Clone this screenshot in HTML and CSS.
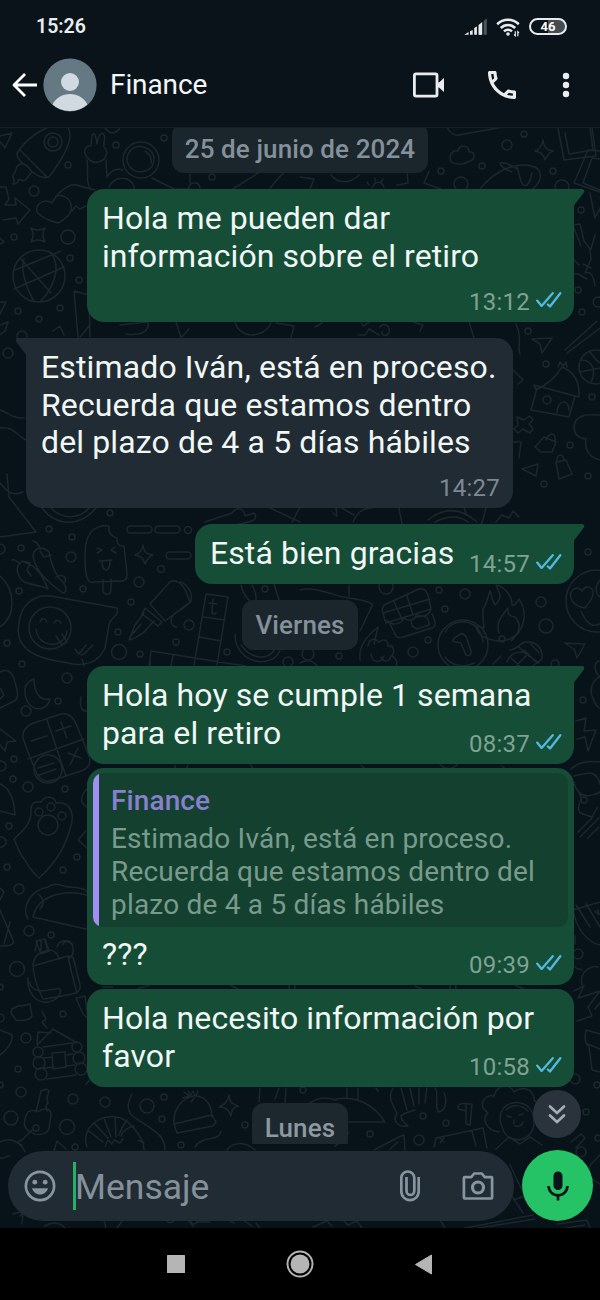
FILE: index.html
```html
<!DOCTYPE html>
<html lang="es">
<head>
<meta charset="utf-8">
<title>Finance</title>
<link rel="stylesheet" href="styles.css">
</head>
<body>
<svg class="defs" width="0" height="0">
  <symbol id="ticks" viewBox="0 0 26 16"><path d="M1.2 8.6 5.6 13.9 16.7 1.2M11.9 12.5l2.1 2L24.3 1.2" fill="none" stroke="#53b9df" stroke-width="2.300" stroke-linecap="round" stroke-linejoin="round"/></symbol>
</svg>
<div class="phone">
  <header class="top">
    <div class="status">
      <span class="clock">15:26</span>
      <div class="status-icons">
        <svg width="24" height="18" viewBox="0 0 24 18"><path fill="#e6ebee" d="M.3 16.7 4.6 14v2.7zM6 13.3l2.7-1.4v4.8H6zM10.2 10l2.7-1.5v8.2h-2.7zM14.5 7l2.7-1.6v11.3h-2.7z"/><path fill="#e6ebee" d="M15.4 6.5 18.2 4v12.7h-2.8z"/><path fill="#4d555c" d="M19.7 3 22.8.5v16.2h-3.1z"/></svg>
        <svg width="25" height="20" viewBox="0 0 25 20"><g fill="none" stroke="#e6ebee" stroke-width="2.6"><path d="M1.2 7.2a15.4 15.4 0 0 1 21.6 0"/><path d="M4.8 11a10.2 10.2 0 0 1 14.4 0"/><path d="M8 14.4a5.7 5.7 0 0 1 8 0"/></g><circle cx="12" cy="17" r="1.8" fill="#e6ebee"/><path d="M19.3 14.2v4.5l-1.2-1.2M21.8 19.2v-4.5l1.2 1.2" fill="none" stroke="#e6ebee" stroke-width="1.2"/></svg>
        <span class="battery">46</span>
      </div>
    </div>
    <div class="toolbar">
      <svg class="back" width="26" height="26" viewBox="0 0 26 26"><path d="M13 2 2 13l11 11M2.5 13H25" fill="none" stroke="#fff" stroke-width="2.8" stroke-linejoin="round"/></svg>
      <svg class="avatar" width="54" height="54" viewBox="0 0 54 54"><circle cx="27" cy="27" r="26.6" fill="#657985"/><circle cx="27" cy="24" r="9" fill="#d0dae0"/><path d="M9.6 46.5C13 39.6 19.5 36 27 36s14 3.6 17.4 10.5A26 26 0 0 1 27 53a26 26 0 0 1-17.4-6.5z" fill="#d0dae0"/></svg>
      <h1 class="name">Finance</h1>
      <svg class="video" width="32" height="26" viewBox="0 0 32 26"><rect x="1.4" y="1.8" width="22.6" height="22.4" rx="1.6" fill="none" stroke="#e9edef" stroke-width="2.8"/><path d="M24 10.500h2l5-4.500v14l-5-4.500h-2z" fill="#e9edef"/></svg>
      <svg class="call" width="28" height="28" viewBox="3 3 18 18"><path fill="#e9edef" d="M6.540 5c.06.89.21 1.760.45 2.590l-1.200 1.200c-.41-1.200-.67-2.470-.76-3.790h1.510m9.860 12.020c.85.24 1.720.39 2.600.45v1.490c-1.320-.09-2.590-.35-3.800-.75l1.200-1.190M7.500 3H4c-.55 0-1 .45-1 1 0 9.390 7.610 17 17 17 .55 0 1-.45 1-1v-3.490c0-.55-.45-1-1-1-1.240 0-2.450-.2-3.570-.57a.84.84 0 0 0-.31-.05c-.26 0-.51.1-.71.29l-2.200 2.200a15.149 15.149 0 0 1-6.590-6.590l2.200-2.200c.28-.28.36-.67.25-1.020A11.360 11.360 0 0 1 8.500 4c0-.55-.45-1-1-1z"/></svg>
      <svg class="more" width="8" height="26" viewBox="0 0 8 26"><g fill="#e9edef"><circle cx="4" cy="4" r="3.200"/><circle cx="4" cy="13" r="3.200"/><circle cx="4" cy="22" r="3.200"/></g></svg>
    </div>
  </header>

  <main class="chat">
    <svg class="wallpaper" width="600" height="1101" viewBox="0 127 600 1101">
      <g fill="none" stroke="#1b272c" stroke-width="1.500" stroke-linecap="round" stroke-linejoin="round">
        <!-- rocket, hand, astronaut -->
        <path d="M0 136l12-3-7 15-5-6M17 153c12-18 30-28 48-30 5 5 6 13 4 19-4 15-14 26-20 35-9 2-17-4-22-11-6-3-10-8-10-13zM20 150l26 26M22 164c-9 2-4 6-8 10s3 4-1 10c8 0 3-6 8-4s5-1 10-7"/>
        <circle cx="53" cy="142" r="9"/><circle cx="53" cy="142" r="5"/>
        <path d="M88 158c-6-5-3-13 3-12l1-11c2-3 4 0 5 9 1-9 5-13 7-9 2 3-1 8 0 12 5 4 2 12-3 14-6 3-10 1-13-3zM87 160c2 12-2 22 4 30M106 160l1 17c4-7 10-9 16-7M104 126c5 9 12 9 17 0"/>
        <circle cx="141" cy="160" r="18"/><path d="M130 151c8-9 24-3 24 8 0 13-16 16-23 9-5-5-5-12-1-17zM145 151c5 3 7 7 6 12M109 187c4-8 10-10 18-8 6 3 8 6 7 11M152 178l22 11h17M190 174v9M188 189c2-8 11-8 12-1M233 189l47-30M284 173c-4 2-9 10-14 15M300 177l14 2-4 10M331 175c8 10 20 8 28 0M372 188c3-7 9-8 12-1M369 185l-2-3M375 181v-3M381 182l2-3M397 185l11-2-1-13 7-3M429 171l-5 12 17 6"/>
        <!-- cloud, sparkle, fish, photos -->
        <path d="M450 158c0-6 5-8 8-7 2-8 11-5 11 1 6-1 7 7 1 9-5 1-5 4-11 3-5 0-9-1-9-6zM543 140c1 8 4 10 10 11-5 2-6 5-8 9-2-6-4-8-10-9 5-2 7-5 8-11zM447 127c2 5 7 9 12 8l44-8M480 189c16-20 38-28 55-22 9 5 6 18-6 24M512 172c-5-2-11-4-12-9 6-1 11 2 17 6M517 167l4 14c3 8 8 6 11-8M558 128l6 32 32-4-4-28M565 133l4 21 24-4-3-22M600 151l-12-1-14 33 26 9M600 159l-8-1-9 25 17 7"/>
        <!-- arrow, heart, globe -->
        <path d="M0 187l6 0 3 12-4 6 11 0-1-7 15 12-12 14-2-6-13 2M37 212c-2-8 7-14 15-9 5-10 18-22 28-17l15 4M37 212c7 8 17 10 21 11 8-4 15-10 13-18-1-6-7-11-15-9M72 211l4-5 4 3 6-3M0 238l4 4-4 2M31 228c5 3 9 3 14 0-3 5-3 9 0 14-5-3-9-3-14 0 3-5 3-9 0-14z"/>
        <circle cx="39" cy="276" r="26"/><path d="M20 258l31 35M15 270l46-19M14 289l50-22M49 251c12 12 8 32-8 50M24 259c-5 12 6 36 10 42"/>
        <path d="M74 291l15 4 1 42M74 291l4 46M90 325l-10 12M120 325l28-3c2 10-8 14-22 12M0 302l6 0-6 12M0 325l8-3-3 9-5 4M53 331l7-5 4 9M176 322l5 16 8-9M235 322c4 16 28 18 36 1M276 323l18 3-3 12M315 327l7-4-3-5M361 322l2 4 8-5M358 335h7l4-6 10 6M380 327c3-5 11-1 9 5-1 5-8 4-7 0M413 322l10 3-3 6M469 322l5 16M516 324c7 15 1 23 4 30M532 339l20-1-10 15-2-9zM565 350l32-29M567 353l33-25"/>
        <!-- bag and hut -->
        <path d="M574 225l6-1 4 17 6 8 1 10-6 14c6-2 9 4 10 13M579 265l-6-6M574 228l7 18M590 193l5 25 5-10M595 235l-4 14M583 264l8 4M573 274h5l9 5M536 390c13-6 20-13 26-23 10 4 18 13 17 30l-45-12zM537 388l-6 22 38 7 6-21M557 413c0-13 12-15 12-3M558 367l2-5 3 4 3-4 1 5M517 417l7 3 6-4 3 4-4 4 4 5-3 4-7-4-5 4-4-4 4-4zM535 447l9-10 12 5-4 10-11 0zM546 440c4-9 10-7 9 1M522 469l16-5-2 12zM556 462l10-2 6 14-13 5zM557 462c-1-9 7-9 7-1"/>
        <circle cx="596" cy="367" r="17"/><path d="M581 360c13 0 15 13 10 22M590 352c6 8 8 10 10 11M580 372l20-4"/>
        <path d="M600 415c-14-1-26 0-26 13 0 7 5 10 12 11-2 11 4 19 14 21M518 384l5-4-10-10M513 442h8l-2 16"/>
        <circle cx="547" cy="400" r="4"/>
        <path d="M0 410c8 2 12 9 24 8M0 428c14-2 17 8 26 12M7 474l2 23 27 35-36 5M0 483c7 8 12 14 23 9M42 508c15 19 38 19 54 0M51 508c11 12 29 11 38 0"/>
        <!-- chillies, ice lolly -->
        <path d="M22 561c-8 6-5 15 2 21 11 4 20 4 24 7-5-12-10-21-19-25zM22 561l8 2-3 7 4 6M12 560c4-1 5 2 8 4M33 555c2-8 10-9 16-3 3 14 5 19 10 26 8 7 9 14 4 15-19-13-29-26-30-38zM33 541c4 1 6 4 7 8M40 551l4 6 7-2M56 577c5-3 11-1 9 5M86 574c-2-18-1-32 3-39 4-8 14-10 20-9-1 7 3 11 8 12 0 7 3 9 7 8l3 28c1 6-5 8-10 7l-22 1c-6 2-8-3-9-8zM103 580v9c0 7 8 7 8 0v-10M97 548l5 2-5 3M115 547l-4 3 5 3M99 561l13-1M102 561c0 12 8 12 8 0M143 545c1 8 4 9 10 10-5 2-6 5-8 9-2-6-4-8-10-9 5-2 7-4 8-10z"/>
        <rect x="127" y="526" width="25" height="7" rx="3.500"/><rect x="155" y="526" width="25" height="7" rx="3.500"/><rect x="166" y="552" width="25" height="7" rx="3.500"/>
        <path d="M205 522l27-9c5-7 12-5 13 3l9-3c4 5 0 8-6 9l-35 9M270 508l30 14M300 508c-5 5-4 10-8 14M333 513l4 3-1-8M340 507l14 8M353 522c8-18 18-12 26-16M399 508l3 16M428 520c15-12 31-14 49 2M435 522c12-6 24-7 33 0M464 507l2 7M486 508l-5 18M496 522l6-7 7 3 4-7 6 6"/>
        <!-- speech bubble, pen, crossword -->
        <path d="M0 576c16 14 16 40 0 51M20 617c4-15 17-23 31-21l66 12c3 8-7 9-8 17l-4 23c-6 13-17 18-32 16-15-3-39-5-49-18-8-8-6-20-4-29zM40 622c2-5 5-4 7 0M54 623c2-4 5-3 7 0M36 629c2 20 29 20 31 2M56 636l6 9 5-3-5-8M75 649l4 5 7-9M81 655l3-1 9-9"/>
        <circle cx="50" cy="628" r="21"/>
        <path d="M150 604l20-22c6-4 13 2 17 12l3 8-25 19zM145 608l17 14-4 4-16-12zM144 613l-9 12-6 15c2 0 12-5 15-8l10-11M130 637l11-13M180 582c8 2 13 12 11 20M190 602c-7 9-18 9-19 18 0 5 3 7 6 7M206 594l22 3-11 68M206 594l-12 71M203 617l22 3M199 637l22 4M151 651l75 12 20 3M151 651l-2 15M173 655l-2 11M213 599l-1 13c0 3 3 2 4 1M209 603l8 1"/>
        <path d="M241 585c2 9 5 13 10 17M252 585c5 9 4 12 4 15M274 584l5 16M235 634c0 30 38 36 45 16M241 645c9 13 26 17 34 4"/>
        <!-- stall, coin, flame, emoji -->
        <path d="M300 590c18-4 32 6 49 8 6 1 27 4 23 8l-12 25M349 585v11M384 605l35-16c6-1 7 2 9 6l3 14-45 14-4-13zM390 624l5 10c1 4 4 4 8 3l29-9c5-2 3-8 0-14M394 602l8 17M407 596l6 19M383 613l47-14M387 620c5 7 14 4 17-2 5 4 10 3 13-4 5 5 13 1 14-6M411 620c9-6 18-6 18 5l-12 4-5-3zM360 660c-2-14 7-24 18-33l-4 17M368 646c1-8 7-8 11-4 5-4 9-2 9 4 6-1 7 5 4 10 4 2 6 5 4 11M371 654c1 9 10 10 13 2M381 657c4 6 8 5 10-1"/>
        <circle cx="463" cy="645" r="25"/><path d="M445 632c9-16 35-14 38 10M445 657c6 9 20 11 29 6M456 642c-6 0-3-4 5-8 4-1 5 3 6 5l4 12c1 5-5 6-6 2l-4-10zM483 609c4-6 5-13 7-18 2 5 2 9 5 14 10-9 2-15 1-20 7 1 16 10 16 19 0 4 6-2 7-5 9 13 6 33-9 40-14 5-33-1-34-13l8 2-1-8zM499 633c-4-11 4-18 9-25-1 10 5 7 8 10 7 8 1 18-5 23"/>
        <circle cx="597" cy="601" r="31"/><path d="M585 608c-14-2-18-14-11-19 5-3 8 2 8 2 3-6 11-5 11 2 0 6-5 11-8 15zM581 611c8 19 16 14 19 13M600 580c-7 8-3 15 0 17M510 650c8 0 10-9 17-8 8-1 16 5 15 17l-9 7M507 662c3-10 16-13 22-6l10 7M519 647l8 8-11 11M524 650l13 13M530 643l9 10M511 658l11 10M493 664l8-8M565 643l20 1-8 14-3-9z"/>
        <path d="M600 661c-6 0-7 10 0 16-8 2-11 15-7 21 1 4 3 8 7 10M576 721l10-3-2 13 12-1-8 21-3-14-8 2M574 776c11-2 22-8 26 8M571 769c8-8 20-8 29-7M574 782c5 23 26 10 26 10M577 790c10 11-3 14 3 23l12 4 5-9M578 832l14-14M580 837l19-19M588 838l11-11M573 910l27-8M573 908c3 25 18 35 27 37M576 905l14 22M586 904l14 23M595 911l4 4-1-5M575 936v8"/>
        <!-- moon, calculator, paw -->
        <path d="M25 687c3-5 5-7 9-8 0 14 6 22 16 20-3 15-27 14-25-12zM0 672c8-4 13 1 15 10 2 7 5 16-1 19L0 708M0 688l4 7-4 4M0 729l16 12-9 1-2 9-5-6M23 738c-1-6 3-11 8-14l30-10c9-2 13 5 16 12l12 30c3 8-2 13-8 15l-27 9c-8 3-13 1-17-6l-9-22zM47 720l19 56M28 759l56-20M31 741l16-5M56 731l15-5M61 722l6 16M68 753l13 5M78 748l-8 17M38 768l16-5M39 775l17-6"/>
        <circle cx="48" cy="769" r="14"/>
        <path d="M0 784c11 5 14 16 15 31L0 811M14 839c7-7 18-14 17-30 1-10 8-6 10-7 4-7 14-6 15 1 16-2 19 13 14 26-5 18-15 35-31 49-7-5-13-16-17-22-3-5-5-10-8-17zM81 697c-2 12 2 14 6 14M88 788c-9 8-8 15-1 19M86 831l-8 9 9 8"/>
        <circle cx="39" cy="812" r="4"/><circle cx="51" cy="807" r="4"/><circle cx="62" cy="816" r="4"/><circle cx="48" cy="825" r="10"/>
        <!-- taco, lunch bag, cabin -->
        <path d="M28 919c-7-13 3-29 20-32 8-7 17 2 27 0 5 2 10 1 12 5M33 917c4-19 27-29 54-22M33 917l53 12M38 894c7 5 6 11 2 15M0 888l4 4-4 8M0 910l13 30c3 6-8 6-13 6M10 922L4 944M36 941l9-2 4 12-8 3zM37 942l-2 9M41 941v9M45 940l2 8M33 966c0-8 5-13 12-15 7-3 13 2 14 8M33 966l35-10c3 16 6 26 9 37-11 2-22 5-34 6-6-11-9-22-10-33zM57 947c2-7 11-8 15-3 3 8 0 12-2 14M68 956l5 1 7 28c1 5-2 8-8 9M28 978c-1 13 7 26 20 24 7-1 14-6 12-13-6-2-26 9-31-7M63 945c1-6 7-3 8-1M12 1009c5-2 6-4 9-3l9-2 2 12c-3 5-13 5-16 4l-5-7zM76 998l9-2 3 22-5-4zM42 1011l4 8-4 3 5 6M37 1044l1-12 13 1M37 1045l16-16 24 14M0 1030l12 5c2 10-12 20-12 20"/>
        <circle cx="38" cy="1052" r="5"/><circle cx="39" cy="1063" r="6"/><circle cx="41" cy="1074" r="6"/><circle cx="77" cy="1047" r="5"/><circle cx="79" cy="1058" r="6"/><circle cx="81" cy="1069" r="6"/>
        <path d="M43 1047l29-4M44 1058l8-1M44 1068l10-1M47 1079l29-4M52 1053l13-1 1 15-13 2zM67 1055l6-1M67 1066l8-1M86 1084l4-4"/>
        <!-- key, croissant, hat -->
        <path d="M41 1091l5-2 3 2-2 7 1 5-2 3 1 5M41 1091l-5 21M28 1112c4-3 8-1 11-1 5-3 12-3 12 4l-2 14c-4 7-14 7-20 2-7-4-5-12-1-19zM32 1130l-10 10c-6 1-4 4 0 5M0 1142c10-5 20-1 25 10M54 1151l3-10 9 8M132 1094c-9 17-1 22 11 29 14 9 22 14 22 27M87 1147c-5-14 5-27 20-30 15-3 27 8 36 25l1 8M89 1131l14 11M94 1123l14 15M104 1118l7 19M115 1117l1 20M127 1120c-4 5-6 9-8 15M134 1126c-7 1-12 6-13 10M144 1143l-6-3M105 1146l3-6 4 4 2-4 6 3 3-4M174 1124c-1-14 7-26 20-28 10-1 18 8 18 21M174 1124l38-9 4 7-3 4-36 7zM188 1091l3 4 2-4 2 4M183 1098l6-2M184 1092l6 4M196 1096l2-5M191 1102l3-4M229 1095c1 9 4 9 9 11-6 2-6 4-7 10-3-7-5-9-12-9 6-3 8-4 10-12zM221 1131c-2 12-18 3-26 16M227 1150c5-8 18-9 28 0M260 1088l-1 14M275 1099l4-11M286 1088l-1 15M307 1105c12-9 20-8 29-5M347 1088v11M358 1088v11M336 1099c19-3 37 4 49 23h-36M349 1132c-4 7-7 10-14 14M374 1150l27-14 3-1 1 15M390 1149l8-7"/>
        <!-- claw, flag, child -->
        <path d="M393 1088c-6 10 0 16 4 26-5 5 0 14 11 12-4-3-7-7-7-10 4-4 9-4 14-6M401 1088l6 22M410 1088l4 18M419 1086v18M427 1087l-2 16M435 1087c5 9-1 16 3 25 9-1 9-13 6-19M378 1091l-2-3M458 1109c0-8 7-5 14-5l-2 21-4-1v-20M458 1109l8 2M434 1147l2-9 47-10 4 20M472 1131l4 15M440 1138l4 4M444 1138l-4 5M499 1132c-14-2-17-14-11-19-11-8-4-19 6-17 4-14 17-11 20-4 13-9 21 2 20 8l4 4M501 1113c3-10 16-13 25-8 10 7 10 24 3 30-9 9-25 4-27-9-3-4-2-9-1-13zM506 1110c7-6 15-6 22 1M507 1116l4 1M519 1115l4-1M515 1126c4 1 7-1 8-4M496 1149l13-12 11 7 10-7 12 8M514 1120v4"/>
        <path d="M582 985c-3-14 10-20 16-18M574 991l10-5-6 12 22-7-12 16 4 9-15 5M600 1003l-5 6M586 1030l14 4M586 1030c-2 12 0 14 3 17l3 23 8 2M588 1044l12 5M0 1158c6 1 6-3 10-2M13 1214l10-3-1 13M25 1210l-5 6M45 1226c8-5 16-3 20 2M104 1220l2 8M123 1220l-6 8M165 1220c5 4 7 3 10 0M188 1220l5 6M197 1222h13M228 1220l6 3M243 1220l9 6M256 1223l4 5M313 1227l14-6 5 5M343 1220l5 5 9-4 5 7M440 1220l5 8M465 1228l68-13M478 1228l57-9M557 1224l30-4 3 8M566 1228l19-3M600 1155l-9 9c-4 8-2 14 9 20M510 1165l12 25M514 1200l10-4M508 1190l15 23M571 1142l10-8 4 4-9 10M575 967c3 3 5 1 7 3"/>
        <!-- slivers between stacked bubbles -->
        <path d="M175 765v6M188 765l-2 6M250 764l4 6M361 765l5 5M440 764c5 6 12 6 18 0M502 766l7 6M103 987h10M150 985c-5 2-10 2-14 5M230 985l10 5M415 986l9 4M515 985l13 6M150 661v5M300 663c6-4 13-3 18 4M82 659c1 2 2 4 2 7"/>
      </g>
      <g fill="none" stroke="#1b272c" stroke-width="1.500">
        <circle cx="116" cy="145" r="3"/><circle cx="164" cy="138" r="3"/><circle cx="68" cy="165" r="3"/><circle cx="34" cy="191" r="5"/><circle cx="68" cy="237" r="7"/><circle cx="14" cy="237" r="3"/><circle cx="70" cy="258" r="3"/><circle cx="79" cy="280" r="3"/><circle cx="18" cy="311" r="3"/><circle cx="60" cy="308" r="3"/><circle cx="39" cy="319" r="3"/><circle cx="22" cy="336" r="5"/><circle cx="8" cy="353" r="5"/><circle cx="212" cy="177" r="3"/><circle cx="524" cy="134" r="3"/><circle cx="507" cy="145" r="5"/><circle cx="482" cy="166" r="3"/><circle cx="441" cy="171" r="3"/><circle cx="461" cy="184" r="7"/><circle cx="553" cy="171" r="3"/><circle cx="562" cy="187" r="7"/><circle cx="581" cy="210" r="3"/><circle cx="578" cy="290" r="3"/><circle cx="598" cy="302" r="5"/><circle cx="582" cy="312" r="3"/><circle cx="528" cy="331" r="3"/><circle cx="546" cy="364" r="3"/><circle cx="592" cy="397" r="3"/><circle cx="570" cy="445" r="3"/><circle cx="588" cy="476" r="3"/><circle cx="544" cy="484" r="3"/><circle cx="110" cy="513" r="3"/><circle cx="49" cy="529" r="3"/><circle cx="72" cy="537" r="3"/><circle cx="71" cy="557" r="5"/><circle cx="21" cy="548" r="3"/><circle cx="0" cy="549" r="5"/><circle cx="188" cy="530" r="3.500"/><circle cx="161" cy="569" r="3.500"/><circle cx="139" cy="582" r="5"/><circle cx="83" cy="589" r="3"/><circle cx="19" cy="591" r="3"/><circle cx="131" cy="602" r="3"/><circle cx="118" cy="632" r="3"/><circle cx="119" cy="652" r="7.500"/><circle cx="140" cy="654" r="3"/><circle cx="189" cy="625" r="5"/><circle cx="176" cy="642" r="3"/><circle cx="227" cy="652" r="3"/><circle cx="265" cy="589" r="3"/><circle cx="288" cy="662" r="5"/><circle cx="7" cy="643" r="3"/><circle cx="22" cy="664" r="3"/><circle cx="67" cy="678" r="5"/><circle cx="58" cy="701" r="3"/><circle cx="26" cy="711" r="5"/><circle cx="14" cy="759" r="3"/><circle cx="1" cy="766" r="5"/><circle cx="13" cy="779" r="3"/><circle cx="28" cy="787" r="5"/><circle cx="65" cy="789" r="3"/><circle cx="9" cy="826" r="3"/><circle cx="1" cy="842" r="5"/><circle cx="77" cy="857" r="3"/><circle cx="7" cy="867" r="3"/><circle cx="63" cy="870" r="3"/><circle cx="19" cy="889" r="5"/><circle cx="29" cy="931" r="5"/><circle cx="51" cy="935" r="3"/><circle cx="17" cy="969" r="7.500"/><circle cx="0" cy="987" r="3"/><circle cx="0" cy="1018" r="4"/><circle cx="63" cy="1014" r="3"/><circle cx="26" cy="1038" r="5"/><circle cx="18" cy="1069" r="3"/><circle cx="0" cy="1085" r="3"/><circle cx="21" cy="1092" r="5"/><circle cx="73" cy="1099" r="5"/><circle cx="105" cy="1102" r="5"/><circle cx="11" cy="1118" r="7"/><circle cx="67" cy="1127" r="7.500"/><circle cx="75" cy="1147" r="3"/><circle cx="36" cy="1128" r="3"/><circle cx="147" cy="1106" r="7"/><circle cx="164" cy="1097" r="3"/><circle cx="162" cy="1119" r="3"/><circle cx="181" cy="1145" r="3"/><circle cx="245" cy="1125" r="3"/><circle cx="386" cy="587" r="7"/><circle cx="439" cy="590" r="3"/><circle cx="465" cy="594" r="5"/><circle cx="445" cy="609" r="3"/><circle cx="428" cy="640" r="3"/><circle cx="413" cy="652" r="5"/><circle cx="502" cy="639" r="3"/><circle cx="541" cy="602" r="5"/><circle cx="546" cy="626" r="7"/><circle cx="588" cy="552" r="3"/><circle cx="339" cy="656" r="3"/><circle cx="308" cy="654" r="6"/><circle cx="555" cy="664" r="4"/><circle cx="583" cy="700" r="3"/><circle cx="584" cy="800" r="3"/><circle cx="578" cy="954" r="5"/><circle cx="575" cy="1079" r="5"/><circle cx="597" cy="1085" r="3"/><circle cx="586" cy="1112" r="3"/><circle cx="598" cy="1138" r="3"/><circle cx="581" cy="1152" r="5"/><circle cx="303" cy="1090" r="3"/><circle cx="370" cy="1134" r="3"/><circle cx="423" cy="1116" r="3"/><circle cx="446" cy="1123" r="3"/><circle cx="419" cy="1140" r="5"/><circle cx="292" cy="987" r="3"/><circle cx="453" cy="987" r="3"/><circle cx="194" cy="1221" r="3"/>
      </g>
    </svg>

    <section class="messages">
      <div class="day">25 de junio de 2024</div>

      <article class="msg out tail tall">
        <p class="text">Hola me pueden dar<br>información sobre el retiro</p>
        <div class="meta">13:12<svg class="ticks" width="26" height="16"><use href="#ticks"/></svg></div>
      </article>

      <article class="msg in tail quad">
        <p class="text">Estimado Iván, está en proceso.<br>Recuerda que estamos dentro<br>del plazo de 4 a 5 días hábiles</p>
        <div class="meta">14:27</div>
      </article>

      <article class="msg out tail single">
        <p class="text">Está bien gracias</p>
        <div class="meta">14:57<svg class="ticks" width="26" height="16"><use href="#ticks"/></svg></div>
      </article>

      <div class="day">Viernes</div>

      <article class="msg out tail double">
        <p class="text">Hola hoy se cumple 1 semana<br>para el retiro</p>
        <div class="meta">08:37<svg class="ticks" width="26" height="16"><use href="#ticks"/></svg></div>
      </article>

      <article class="msg out reply follow">
        <blockquote class="quote">
          <strong class="quote-name">Finance</strong>
          <p class="quote-text">Estimado Iván, está en proceso.<br>Recuerda que estamos dentro del<br>plazo de 4 a 5 días hábiles</p>
        </blockquote>
        <p class="text">???</p>
        <div class="meta">09:39<svg class="ticks" width="26" height="16"><use href="#ticks"/></svg></div>
      </article>

      <article class="msg out double follow">
        <p class="text">Hola necesito información por<br>favor</p>
        <div class="meta">10:58<svg class="ticks" width="26" height="16"><use href="#ticks"/></svg></div>
      </article>

      <div class="day last">Lunes</div>
    </section>

    <div class="scroll-down">
      <svg width="20" height="22" viewBox="0 0 20 22"><path d="m3 3.500 7 6.500 7-6.500M3 12.500l7 6.500 7-6.500" fill="none" stroke="#a3adb4" stroke-width="2.700" stroke-linecap="round"/></svg>
    </div>

    <footer class="composer">
      <div class="field">
        <svg class="smile" width="32" height="32" viewBox="0 0 32 32"><circle cx="16" cy="16" r="14.100" fill="none" stroke="#8695a0" stroke-width="2.700"/><circle cx="10.800" cy="12.200" r="2.400" fill="#8695a0"/><circle cx="21.200" cy="12.200" r="2.400" fill="#8695a0"/><path d="M8 18.200h16c-1 3.700-4 6.300-8 6.300s-7-2.600-8-6.300z" fill="#8695a0"/></svg>
        <span class="placeholder">Mensaje</span>
        <svg class="clip" width="20" height="32" viewBox="0 0 20 32"><path d="M18.700 7v14.500a8.700 8.700 0 0 1-17.400 0V8a6.500 6.500 0 0 1 13 0v13a3.900 3.900 0 0 1-7.800 0V7" fill="none" stroke="#8695a0" stroke-width="2.700"/></svg>
        <svg class="camera" width="32" height="28" viewBox="0 0 32 28"><path d="M2.800 5.200h6.400l3-3.700h7.600l3 3.700h6.400q.9 0 .9.900v19.500q0 .9-.9.900H2.800q-.9 0-.9-.9V6.100q0-.9.900-.9z" fill="none" stroke="#8695a0" stroke-width="2.700" stroke-linejoin="round"/><circle cx="16" cy="15.500" r="5.500" fill="none" stroke="#8695a0" stroke-width="3.200"/></svg>
      </div>
      <div class="mic">
        <svg width="22" height="30" viewBox="0 0 22 30"><rect x="6.500" y=".5" width="9" height="18.500" rx="4.500" fill="#0b141a"/><path d="M1.600 15a9.400 9.400 0 0 0 18.800 0M11 24.500v5" fill="none" stroke="#0b141a" stroke-width="2.700"/></svg>
      </div>
    </footer>
  </main>

  <nav class="system-nav">
    <svg width="18" height="18"><rect width="18" height="18" rx=".5" fill="#b5b5b5"/></svg>
    <svg width="28" height="28"><circle cx="14" cy="14" r="12.500" fill="none" stroke="#b5b5b5" stroke-width="2"/><circle cx="14" cy="14" r="9.500" fill="#b5b5b5"/></svg>
    <svg width="18" height="21"><path d="M16.500 1v19L.5 10.500z" fill="#b5b5b5" stroke="#b5b5b5" stroke-linejoin="round"/></svg>
  </nav>
</div>
</body>
</html>
```
FILE: styles.css
```css
* { box-sizing: border-box; }
body, h1, p, blockquote { margin: 0; }
body { background: #000; font-family: Roboto, "Liberation Sans", sans-serif; color: #f0f7f4; }
svg { display: block; flex: none; }
.defs { position: absolute; }

.phone { width: 600px; height: 1300px; display: flex; flex-direction: column; overflow: hidden; }

.top { height: 128px; background: #0b131a; border-bottom: 1px solid #151f26; position: relative; z-index: 1; flex: none; }
.status { height: 53px; padding: 0 33px 0 36px; display: flex; align-items: center; justify-content: space-between; }
.clock { font-size: 19.5px; font-weight: 600; color: #e9edef; }
.status-icons { display: flex; align-items: center; gap: 8px; }
.battery { width: 38px; height: 17px; border: 2px solid #e6ebee; border-radius: 9px; font-size: 13px; line-height: 13px; font-weight: 700; text-align: center; color: #fff; background: linear-gradient(90deg, #0b131a 50%, #454d52 50%); }
.toolbar { height: 64px; padding-left: 12px; display: flex; align-items: center; }
.avatar { margin-left: 5px; }
.name { margin-left: 13px; width: 303px; font-size: 28px; line-height: 33px; padding-bottom: 2px; font-weight: 400; color: #f4f7f8; letter-spacing: -0.1px; }
.call { margin-left: 43px; }
.more { margin-left: 46px; }

.chat { position: relative; height: 1100px; flex: none; background: #081319; overflow: hidden; }
.wallpaper { position: absolute; left: 0; top: -1px; }

.messages { position: relative; height: 1016px; overflow: hidden; display: flex; flex-direction: column; padding: 0 26px; margin-bottom: 6px; }
.messages > * { flex: none; margin-top: 16px; }
.messages > .day:first-child { margin-top: -5px; line-height: 52px; }
.messages > .follow { margin-top: 4px; }

.day { align-self: center; height: 50px; padding: 0 13px; border-radius: 12px; background: #1b262c; color: #84919a; font-size: 26px; line-height: 51px; font-weight: 500; white-space: nowrap; letter-spacing: 0.1px; }
.day.last { color: #8d999f; background: #1d282e; }

.msg { position: relative; display: grid; border-radius: 17px; padding: 11px 12px 6px 15px; white-space: nowrap; }
.msg > .text, .msg > .meta { grid-area: 1 / 1; }
.out { align-self: flex-end; width: 487px; background: #154d37; }
.in { align-self: flex-start; width: 487px; background: #202b33; }
.out.tail { border-top-right-radius: 0; }
.in.tail { border-top-left-radius: 0; }
.tail::after { content: ""; position: absolute; top: 0; width: 11px; height: 17px; }
.out.tail::after { right: -10.5px; background: #154d37; clip-path: path("M0 0H9Q12 1 10 4L0.5 16.500H0z"); }
.in.tail::after { left: -10.5px; background: #202b33; clip-path: path("M11 0H2Q-1 1 1 4L10.500 16.500H11z"); }
.tall { height: 133px; }
.quad { height: 170px; }
.single { height: 60px; width: 379px; }
.double { height: 98px; }

.text { font-size: 32px; line-height: 37.7px; letter-spacing: 0.08px; }
.in .text { letter-spacing: 0.13px; }
.meta { place-self: end; display: flex; font-size: 24px; line-height: 28px; letter-spacing: 0.25px; color: #7fa293; }
.in .meta { color: #7d8992; padding-right: 1px; }
.ticks { margin: 4px 0 0 6px; }

.reply { height: 217px; grid-template-rows: 154px 1fr; row-gap: 9px; padding: 5px 12px 6px 15px; }
.quote { grid-row: 1; margin: 0 -6px 0 -9px; border-radius: 10px; background: linear-gradient(90deg, #a18ff6 6px, #144030 6px); padding: 11px 0 0 18px; }
.reply > .text, .reply > .meta { grid-area: 2 / 1; }
.quote-name { display: block; font-size: 28px; line-height: 33px; font-weight: 500; color: #8780cd; letter-spacing: 0.1px; }
.quote-text { margin-top: 5px; font-size: 28px; line-height: 33px; letter-spacing: 0.2px; color: #799b8c; }

.scroll-down { position: absolute; left: 533px; top: 962px; width: 48px; height: 48px; border-radius: 50%; background: #2a333b; display: flex; align-items: center; justify-content: center; }

.composer { position: relative; display: flex; align-items: center; height: 71px; padding: 0 7px 0 8px; gap: 8px; }
.field { width: 506px; height: 70px; border-radius: 35px; background: #202b33; display: flex; align-items: center; padding-left: 16px; }
.placeholder { margin-left: 17px; width: 327px; height: 48px; border-left: 3.5px solid #25b164; font-size: 35.5px; line-height: 51px; color: #84919b; text-indent: -1px; }
.clip { margin-right: 42px; }
.mic { width: 71px; height: 71px; border-radius: 50%; background: #25c366; display: flex; align-items: center; justify-content: center; }

.system-nav { height: 72px; background: #000; display: flex; align-items: center; justify-content: center; gap: 101px; }
```
